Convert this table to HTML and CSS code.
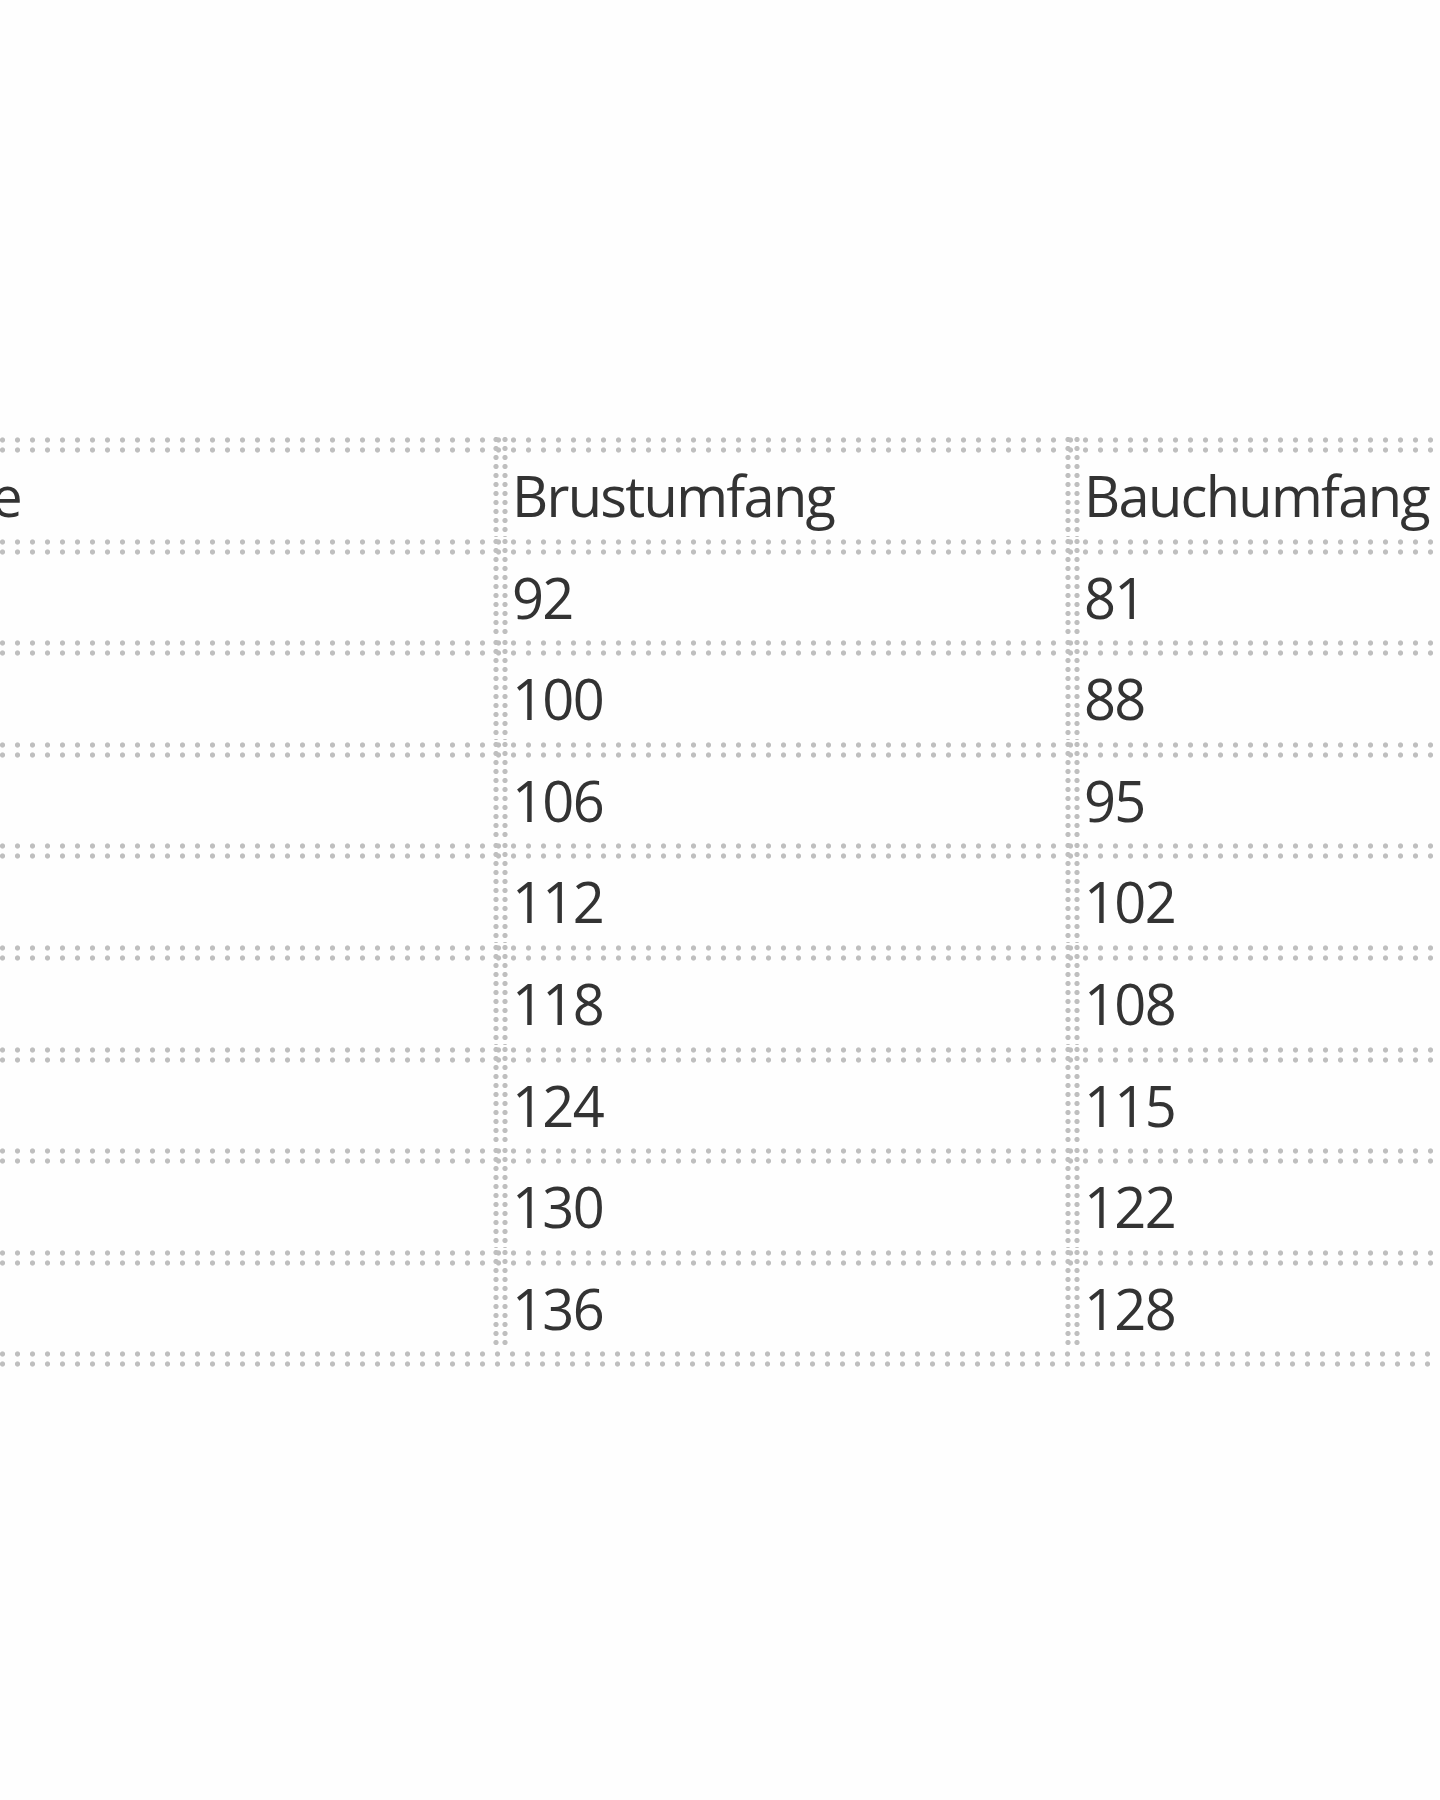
FILE: index.html
```html
<!DOCTYPE html>
<html lang="de">
<head>
<meta charset="utf-8">
<title>Größentabelle</title>
<link rel="stylesheet" href="styles.css">
</head>
<body>
<main class="sheet">
  <div class="table">
    <div class="cell">Größe</div><div class="cell">Brustumfang</div><div class="cell">Bauchumfang</div>
    <div class="cell"></div><div class="cell">92</div><div class="cell">81</div>
    <div class="cell"></div><div class="cell">100</div><div class="cell">88</div>
    <div class="cell"></div><div class="cell">106</div><div class="cell">95</div>
    <div class="cell"></div><div class="cell">112</div><div class="cell">102</div>
    <div class="cell"></div><div class="cell">118</div><div class="cell">108</div>
    <div class="cell"></div><div class="cell">124</div><div class="cell">115</div>
    <div class="cell"></div><div class="cell">130</div><div class="cell">122</div>
    <div class="cell"></div><div class="cell">136</div><div class="cell">128</div>
  </div>
</main>
</body>
</html>
```

FILE: styles.css
```css
html, body {
  margin: 0;
  padding: 0;
  background: #fefefe;
}
body {
  width: 1440px;
  height: 1800px;
  overflow: hidden;
}
.sheet {
  padding-top: 435px;
}
.table {
  display: grid;
  grid-template-columns: 646px 572px 600px;
  grid-auto-rows: 101.6px;
  margin-left: -155px;
  width: 1818px;
  padding-bottom: 20px;
  background-image:
    radial-gradient(circle at 7.5px 5px, #bfbfbf 0 2.2px, rgba(191,191,191,0) 3px),
    radial-gradient(circle at 7.5px 5px, #bfbfbf 0 2.2px, rgba(191,191,191,0) 3px);
  background-size: 15px 10px, 15px 10px;
  background-repeat: repeat-x, repeat-x;
  background-position: 0 calc(100% - 10px), 0 100%;
}
.cell {
  padding: 22px 0 0 21px;
  font-family: "Open Sans", "Liberation Sans", sans-serif;
  font-size: 56px;
  line-height: 76px;
  letter-spacing: -1.7px;
  color: #333333;
  white-space: nowrap;
  background-image:
    radial-gradient(circle at 7.5px 5px, #bfbfbf 0 2.2px, rgba(191,191,191,0) 3px),
    radial-gradient(circle at 7.5px 5px, #bfbfbf 0 2.2px, rgba(191,191,191,0) 3px),
    radial-gradient(circle at 5px 4.5px, #bfbfbf 0 2.2px, rgba(191,191,191,0) 3px),
    radial-gradient(circle at 5px 4.5px, #bfbfbf 0 2.2px, rgba(191,191,191,0) 3px);
  background-size: 15px 10px, 15px 10px, 10px 9px, 10px 9px;
  background-repeat: repeat-x, repeat-x, repeat-y, repeat-y;
  background-position: 0 0, 0 10px, 0 0, 9px 0;
}
```
